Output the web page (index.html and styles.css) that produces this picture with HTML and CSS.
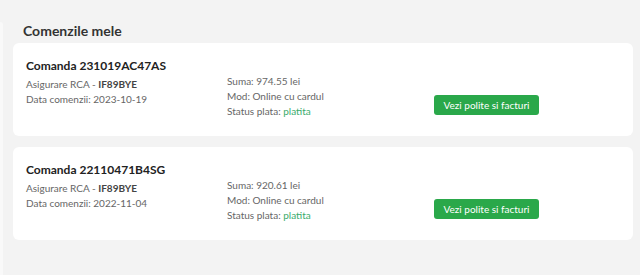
FILE: index.html
```html
<!DOCTYPE html>
<html lang="ro">
<head>
    <meta charset="UTF-8">
    <meta name="viewport" content="width=device-width, initial-scale=1.0">
    <title>Comenzile mele</title>
    <link rel="stylesheet" href="styles.css">
</head>
<body>
    <div class="layout">
        <div class="sidebar"></div>
        <div class="orders">
            <h2 class="orders-title">Comenzile mele</h2>

            <div class="order-card">
                <div class="order-main">
                    <div class="order-name">Comanda 231019AC47AS</div>
                    <div class="order-line">Asigurare RCA - <b>IF89BYE</b></div>
                    <div class="order-line">Data comenzii: 2023-10-19</div>
                </div>
                <div class="order-pay">
                    <div class="order-line">Suma: 974.55 lei</div>
                    <div class="order-line">Mod: Online cu cardul</div>
                    <div class="order-line">Status plata: <span class="paid">platita</span></div>
                </div>
                <div class="order-action">
                    <button class="btn-green">Vezi polite si facturi</button>
                </div>
            </div>

            <div class="order-card">
                <div class="order-main">
                    <div class="order-name">Comanda 22110471B4SG</div>
                    <div class="order-line">Asigurare RCA - <b>IF89BYE</b></div>
                    <div class="order-line">Data comenzii: 2022-11-04</div>
                </div>
                <div class="order-pay">
                    <div class="order-line">Suma: 920.61 lei</div>
                    <div class="order-line">Mod: Online cu cardul</div>
                    <div class="order-line">Status plata: <span class="paid">platita</span></div>
                </div>
                <div class="order-action">
                    <button class="btn-green">Vezi polite si facturi</button>
                </div>
            </div>
        </div>
    </div>
</body>
</html>
```

FILE: styles.css
```css
body {
    font-family: Lato, "Open Sans", sans-serif;
    background-color: #f3f3f3;
    margin: 0;
    padding: 0;
    color: #333;
}
.layout {
    display: flex;
    min-height: 275px;
}
.sidebar {
    flex: 0 0 3px;
    margin-top: 22px;
    background-color: #f9f9f9;
    border-top-right-radius: 6px;
}
.orders {
    flex-grow: 1;
    padding: 21px 7px 0 10px;
}
.orders-title {
    margin: 0 0 2px 10px;
    font-size: 14px;
    line-height: 20px;
    font-weight: 700;
    color: #333;
}
.order-card {
    display: flex;
    background-color: white;
    border-radius: 6px;
    padding: 15px 13px 17px;
    margin-bottom: 11px;
}
.order-main {
    flex: 0 0 201px;
}
.order-name {
    font-size: 12px;
    font-weight: 700;
    line-height: 16px;
    margin-bottom: 3px;
    color: #222;
}
.order-line {
    font-size: 10px;
    line-height: 15px;
    color: #666;
}
.order-line b {
    color: #444;
}
.order-pay {
    flex: 0 0 207px;
    padding-top: 16px;
}
.paid {
    color: #3aab6c;
}
.order-action {
    padding-top: 35px;
}
.btn-green {
    font-family: inherit;
    font-size: 10px;
    height: 20px;
    width: 105px;
    padding: 0;
    border: none;
    border-radius: 3px;
    background-color: #2aa84a;
    color: white;
    cursor: pointer;
}
.btn-green:hover {
    background-color: #218838;
}
```
